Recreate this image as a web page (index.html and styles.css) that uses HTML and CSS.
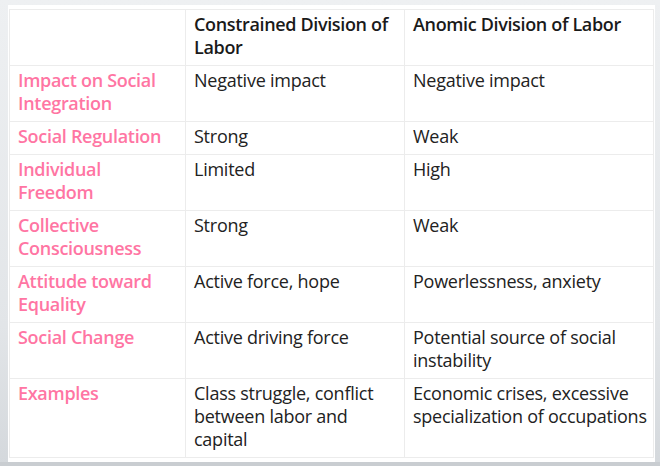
FILE: index.html
```html
<!DOCTYPE html>
<html lang="en">
<head>
<meta charset="utf-8">
<title>Division of Labor</title>
<link rel="stylesheet" href="styles.css">
</head>
<body>
<div class="panel">
  <table class="compare">
    <colgroup>
      <col class="c1"><col class="c2"><col class="c3">
    </colgroup>
    <thead>
      <tr>
        <th></th>
        <th>Constrained Division of Labor</th>
        <th>Anomic Division of Labor</th>
      </tr>
    </thead>
    <tbody>
      <tr><th>Impact on Social Integration</th><td>Negative impact</td><td>Negative impact</td></tr>
      <tr><th>Social Regulation</th><td>Strong</td><td>Weak</td></tr>
      <tr><th>Individual Freedom</th><td>Limited</td><td>High</td></tr>
      <tr><th>Collective Consciousness</th><td>Strong</td><td>Weak</td></tr>
      <tr><th>Attitude toward Equality</th><td>Active force, hope</td><td>Powerlessness, anxiety</td></tr>
      <tr><th>Social Change</th><td>Active driving force</td><td>Potential source of social instability</td></tr>
      <tr><th>Examples</th><td>Class struggle, conflict between labor and capital</td><td>Economic crises, excessive specialization of occupations</td></tr>
    </tbody>
  </table>
</div>
</body>
</html>
```

FILE: styles.css
```css
html, body {
  margin: 0;
  padding: 0;
  height: 466px;
  overflow: hidden;
}
body {
  background: linear-gradient(#eef0f2 0, #e2e5e8 70%, #d4d8dc 100%);
  font-family: "Open Sans", "Noto Sans", sans-serif;
  font-size: 18px;
  color: #222;
  border-bottom: 4px solid #c9cdd1;
  box-sizing: border-box;
}
.panel {
  margin: 5px 5px 0 8px;
  padding: 4px 2px 7px 1px;
  background: #fff;
  height: 457px;
  box-sizing: border-box;
}
.compare {
  border-collapse: collapse;
  table-layout: fixed;
  width: 644px;
}
.c1 { width: 176px; }
.c2 { width: 219px; }
.c3 { width: 249px; }
.compare th,
.compare td {
  border: 1px solid #ececec;
  padding: 3px 2px 6px 8px;
  line-height: 23px;
  text-align: left;
  vertical-align: top;
}
.compare thead th {
  font-weight: 600;
  color: #1a1a1a;
  letter-spacing: -0.35px;
}
.compare tbody th {
  font-weight: 600;
  color: #ff75a3;
  letter-spacing: -0.3px;
  padding-right: 6px;
}
.compare td {
  font-weight: 400;
  color: #222;
  letter-spacing: -0.25px;
}
```
